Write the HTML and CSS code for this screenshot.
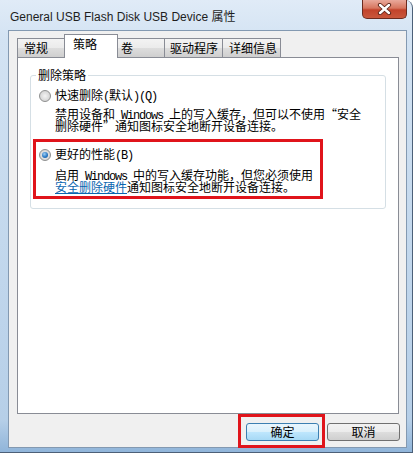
FILE: index.html
```html
<!DOCTYPE html>
<html>
<head>
<meta charset="utf-8">
<link rel="stylesheet" href="styles.css">
</head>
<body>
<div class="window">
  <div class="titlebar">
    <span class="title">General USB Flash Disk USB Device <span class="cjk">属性</span></span>
    <div class="close">
      <svg width="17" height="12" viewBox="0 0 17 12">
        <path d="M4 2 L13 10 M13 2 L4 10" stroke="#5a2418" stroke-width="4.2" stroke-linecap="round" fill="none"/>
        <path d="M4 2 L13 10 M13 2 L4 10" stroke="#ffffff" stroke-width="2.4" stroke-linecap="round" fill="none"/>
      </svg>
    </div>
  </div>
  <div class="client">
    <div class="tabs">
      <div class="tab t1">常规</div>
      <div class="tab sel">策略</div>
      <div class="tab t3">卷</div>
      <div class="tab t4">驱动程序</div>
      <div class="tab t5">详细信息</div>
    </div>
    <div class="panel">
      <div class="group">
        <div class="legend">删除策略</div>
        <div class="option first">
          <div class="row"><span class="radio"></span><span class="label">快速删除<span class="hw">(</span>默认<span class="hw">)(Q)</span></span></div>
          <div class="desc">
            <div class="line">禁用设备和<span class="hw"> Windows </span>上的写入缓存，但可以不使用<span class="fw">“</span>安全</div>
            <div class="line">删除硬件<span class="fw">”</span>通知图标安全地断开设备连接。</div>
          </div>
        </div>
        <div class="option mark">
          <div class="row"><span class="radio on"></span><span class="label">更好的性能<span class="hw">(B)</span></span></div>
          <div class="desc d2">
            <div class="line">启用<span class="hw"> Windows </span>中的写入缓存功能，但您必须使用</div>
            <div class="line"><span class="link">安全删除硬件</span>通知图标安全地断开设备连接。</div>
          </div>
        </div>
      </div>
    </div>
    <div class="buttons">
      <div class="btnwrap">
        <div class="btn ok">确定</div>
        <div class="redbox"></div>
      </div>
      <div class="btn">取消</div>
    </div>
  </div>
</div>
</body>
</html>
```
FILE: styles.css
```css
html, body {
  margin: 0;
  padding: 0;
  background: #ffffff;
}
body {
  width: 418px;
  height: 454px;
  overflow: hidden;
  font-family: "Noto Sans CJK SC", "Noto Sans", sans-serif;
  font-size: 12px;
  color: #000;
}
.window {
  width: 413px;
  height: 453px;
  box-sizing: border-box;
  border-right: 1px solid #4c6078;
  border-bottom: 1px solid #4c6078;
  border-top-right-radius: 8px;
  background: linear-gradient(to bottom, #e0ebf7 0px, #d3e3f3 40px, #c6daee 200px, #b6cfe8 420px, #8fb4d9 453px);
  display: flex;
  flex-direction: column;
}
.titlebar {
  height: 30px;
  display: flex;
  align-items: flex-start;
  padding-left: 10px;
}
.title {
  font-family: "Liberation Sans", Arial, sans-serif;
  font-size: 12px;
  line-height: 14px;
  margin-top: 9px;
  color: #1e1e1e;
  white-space: nowrap;
}
.cjk {
  font-family: "Noto Sans CJK SC", sans-serif;
}
.close {
  margin-left: auto;
  margin-right: 5px;
  width: 45px;
  height: 19px;
  box-sizing: border-box;
  border: 1px solid #6b2b1f;
  border-top: none;
  border-radius: 0 0 5px 5px;
  background: linear-gradient(to bottom, #e9a99b 0%, #d7765f 45%, #c2432b 55%, #c9573c 100%);
  display: flex;
  align-items: center;
  justify-content: center;
}
.client {
  margin-left: 8px;
  width: 399px;
  height: 418px;
  box-sizing: border-box;
  border: 1px solid #8399b1;
  background: #f0f0f0;
  padding-top: 3px;
  display: flex;
  flex-direction: column;
}
.tabs {
  height: 23px;
  display: flex;
  align-items: flex-end;
  margin-left: 8px;
}
.tab {
  height: 19px;
  box-sizing: border-box;
  border: 1px solid #898c95;
  border-bottom: none;
  background: linear-gradient(to bottom, #f3f3f3 0%, #ebebeb 50%, #dddddd 51%, #cfcfcf 100%);
  padding-left: 5px;
  line-height: 18px;
  font-size: 12px;
}
.tab + .tab { margin-left: -1px; }
.t1 { width: 48px; padding-left: 6px; }
.sel {
  width: 54px;
  height: 24px;
  margin: 0 -2px -1px -3px;
  background: #ffffff;
  position: relative;
  z-index: 1;
  padding-left: 8px;
  line-height: 18px;
}
.t3 { width: 50px; margin-left: 0; }
.t4 { width: 59px; }
.t5 { width: 59px; padding-left: 6px; }
.panel {
  margin: 0 7px 0 8px;
  height: 357px;
  box-sizing: border-box;
  border: 1px solid #898c95;
  background: #ffffff;
  padding: 17px 0 0 12px;
}
.group {
  width: 356px;
  height: 134px;
  box-sizing: border-box;
  border: 1px solid #d5dfe5;
  border-radius: 3px;
}
.legend {
  width: max-content;
  margin: -7px 0 0 5px;
  padding: 0 2px;
  background: #ffffff;
  line-height: 12px;
  height: 12px;
}
.option.first {
  margin-top: 9px;
  padding-left: 8px;
}
.row {
  display: flex;
  align-items: center;
  height: 12px;
}
.label {
  margin-left: 4px;
  line-height: 12px;
  white-space: nowrap;
}
.radio {
  width: 12px;
  height: 12px;
  box-sizing: border-box;
  border-radius: 50%;
  border: 1px solid #8e8f8f;
  background: radial-gradient(circle at 50% 50%, #f4f4f4 0%, #dcdcdc 55%, #c9c9c9 100%);
  position: relative;
}
.radio.on::after {
  content: "";
  position: absolute;
  left: 2px;
  top: 2px;
  width: 6px;
  height: 6px;
  border-radius: 50%;
  background: radial-gradient(circle at 40% 35%, #9fd0f5 0%, #2a79c4 55%, #164f94 100%);
}
.desc {
  margin: 6px 0 0 16px;
  white-space: nowrap;
}
.line {
  height: 11.5px;
  line-height: 11.5px;
}
.hw {
  font-family: "Liberation Mono", monospace;
  letter-spacing: -1.2px;
}
.fw {
  display: inline-block;
  width: 12px;
  text-align: center;
}
.option.mark {
  margin: 8px 0 0 2px;
  width: 290px;
  height: 60px;
  box-sizing: border-box;
  border: 3px solid #e0141b;
  padding: 7px 0 0 3px;
}
.desc.d2 { margin-top: 8px; }
.link {
  color: #0a66b0;
  text-decoration: underline;
}
.buttons {
  display: flex;
  justify-content: flex-end;
  padding: 9px 6px 0 0;
  gap: 8px;
}
.btnwrap { position: relative; }
.btn {
  width: 73px;
  height: 18px;
  box-sizing: border-box;
  border: 1px solid #707070;
  border-radius: 3px;
  background: linear-gradient(to bottom, #f2f2f2 0%, #ebebeb 50%, #dddddd 51%, #cfcfcf 100%);
  text-align: center;
  line-height: 16px;
  font-size: 12px;
}
.btn.ok {
  border-color: #3c7fb1;
  background: linear-gradient(to bottom, #eaf6fd 0%, #d9f0fc 50%, #bee6fd 51%, #a7d9f5 100%);
}
.redbox {
  position: absolute;
  left: -8px;
  top: -9px;
  width: 87px;
  height: 34px;
  box-sizing: border-box;
  border: 3px solid #e0141b;
}
```
